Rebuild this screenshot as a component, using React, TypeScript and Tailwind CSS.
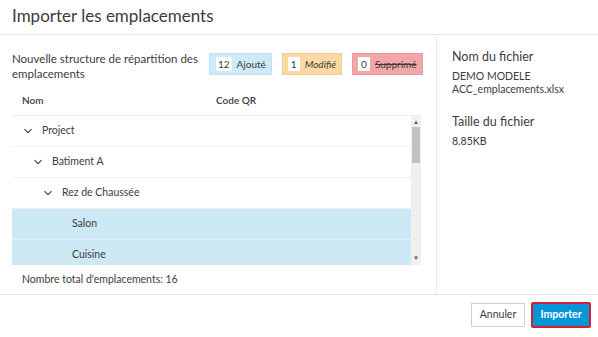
import React from 'react';

const rows = [
  { name: 'Project', level: 0, open: true, selected: false },
  { name: 'Batiment A', level: 1, open: true, selected: false },
  { name: 'Rez de Chaussée', level: 2, open: true, selected: false },
  { name: 'Salon', level: 3, open: false, selected: true },
  { name: 'Cuisine', level: 3, open: false, selected: true },
];

function Chevron() {
  return (
    <svg width="10" height="10" viewBox="0 0 10 10" className="shrink-0">
      <path d="M1.5 3.2 L5 6.7 L8.5 3.2" fill="none" stroke="#3c3c3c" strokeWidth="1.1" />
    </svg>
  );
}

const padByLevel = ['pl-[11px]', 'pl-[21px]', 'pl-[31px]', 'pl-[60px]'];

export default function App() {
  return (
    <div className="w-[598px] h-[337px] bg-white text-[#3c3c3c] flex flex-col overflow-hidden font-['Lato',sans-serif]">
      {/* Header */}
      <div className="h-[35px] border-b border-[#e8e8e8] px-3 flex items-center">
        <h1 className="text-[17px] leading-none text-[#3c3c3c] -mt-[4px]">Importer les emplacements</h1>
      </div>

      {/* Body */}
      <div className="flex h-[260px] border-b border-[#e3e3e3]">
        {/* Left */}
        <div className="w-[437px] border-r border-[#ebebeb] pl-3 pr-[15px] flex flex-col">
          <div className="flex items-start pt-[16px] h-[50px] shrink-0">
            <p className="text-[11.5px] leading-[15px] w-[197px] shrink-0">
              Nouvelle structure de répartition des emplacements
            </p>
            <div className="flex gap-[10px] mt-[2px] text-[10px] whitespace-nowrap">
              <div className="flex items-center h-[22px] pl-[6px] pr-[5px] bg-[#cfe9f6] border border-[#bfe0f0]">
                <span className="bg-white px-[2px] leading-[14px] mr-[5px]">12</span>
                <span>Ajouté</span>
              </div>
              <div className="flex items-center h-[22px] pl-[5px] pr-[5px] bg-[#fcd9a4] border border-[#f5cd93]">
                <span className="bg-white px-[3px] leading-[14px] mr-[5px]">1</span>
                <span className="italic">Modifié</span>
              </div>
              <div className="flex items-center h-[22px] pl-[5px] pr-[5px] bg-[#f2a6a8] border border-[#eb9a9c]">
                <span className="bg-white px-[3px] leading-[14px] mr-[5px]">0</span>
                <span className="line-through">Supprimé</span>
              </div>
            </div>
          </div>

          {/* Table header */}
          <div className="flex h-[31px] shrink-0 items-center border-b border-[#ececec] text-[10px] font-semibold">
            <span className="pl-[10px] w-[204px]">Nom</span>
            <span>Code QR</span>
          </div>

          {/* Table body */}
          <div className="flex h-[149px] shrink-0">
            <div className="flex-1 flex flex-col overflow-hidden">
              {rows.map((r) => (
                <div
                  key={r.name}
                  className={`h-[31px] shrink-0 flex items-center gap-[9px] text-[10.5px] border-b ${
                    r.selected ? 'bg-[#cde9f5] border-[#e2f1f8]' : 'border-[#f0f0f0]'
                  } ${padByLevel[r.level]}`}
                >
                  {r.open && <Chevron />}
                  <span>{r.name}</span>
                </div>
              ))}
            </div>
            <div className="w-[10px] bg-[#f0f0f0] flex flex-col items-center">
              <span className="text-[6px] leading-none text-[#555] mt-[3px]">▲</span>
              <div className="w-[8px] h-[36px] bg-[#c1c1c1] mt-[2px]" />
              <div className="flex-1" />
              <span className="text-[6px] leading-none text-[#555] mb-[4px]">▼</span>
            </div>
          </div>

          <div className="text-[10.5px] pl-[10px] pt-[7px]">Nombre total d'emplacements: 16</div>
        </div>

        {/* Right */}
        <div className="flex-1 pl-[15px] pt-[14px]">
          <div className="text-[12.5px] leading-[15px]">Nom du fichier</div>
          <div className="text-[10.5px] leading-[13px] mt-[6px]">
            DEMO MODELE
            <br />
            ACC_emplacements.xlsx
          </div>
          <div className="text-[12.5px] leading-[15px] mt-[18px]">Taille du fichier</div>
          <div className="text-[10.5px] leading-[13px] mt-[6px]">8.85KB</div>
        </div>
      </div>

      {/* Footer */}
      <div className="flex-1 flex items-center justify-end gap-[6px] pr-[7px] -mt-[2px]">
        <button className="h-[24px] w-[54px] border border-[#cfcfcf] bg-white text-[10.5px] text-[#3c3c3c]">
          Annuler
        </button>
        <button className="h-[26px] w-[60px] border-2 border-[#d51f2f] rounded-[2px] bg-[#0696d7] text-[10.5px] font-bold text-white">
          Importer
        </button>
      </div>
    </div>
  );
}
